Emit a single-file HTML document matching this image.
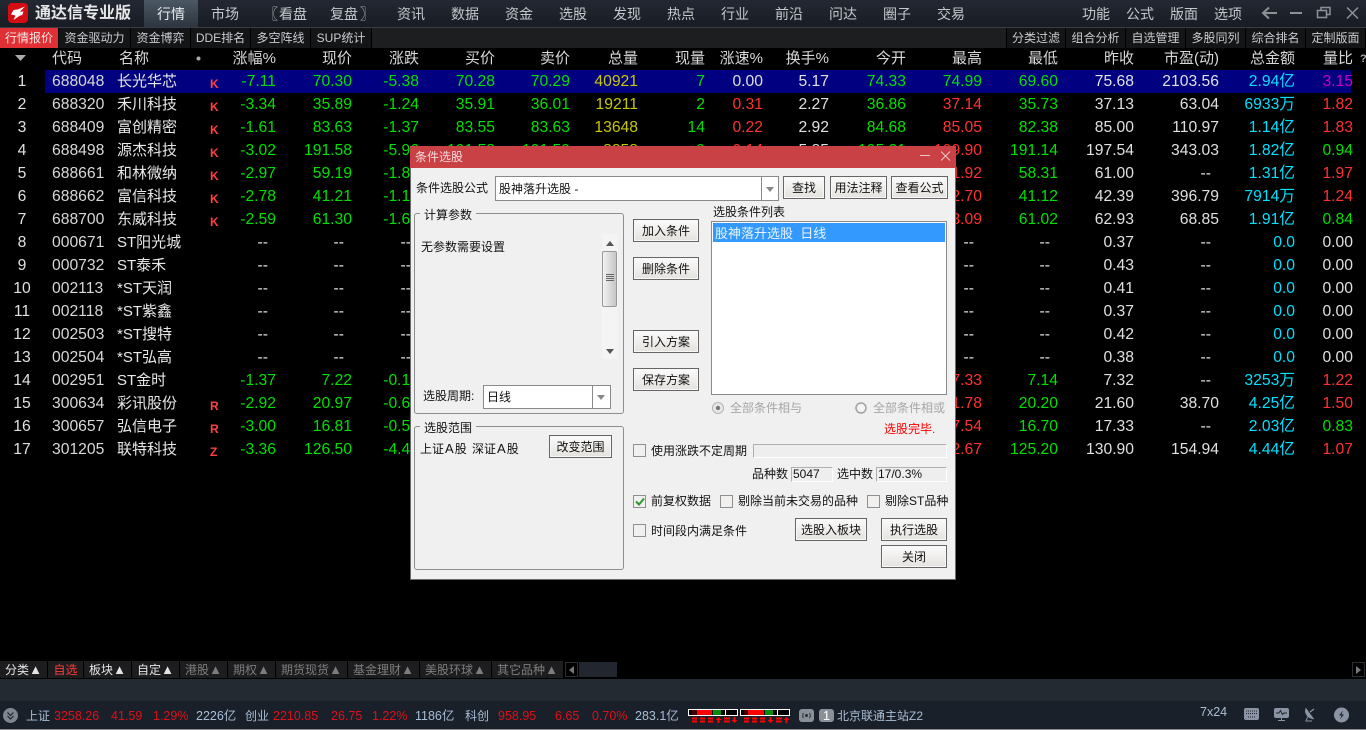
<!DOCTYPE html>
<html><head><meta charset="utf-8">
<style>
html,body{margin:0;padding:0;background:#000;width:1366px;height:730px;overflow:hidden}
body{font-family:"Liberation Sans","Noto Sans CJK SC",sans-serif;position:relative;color:#ddd}
div,span,b,i{position:absolute;white-space:nowrap;box-sizing:border-box;font-style:normal}
#top{left:0;top:0;width:1366px;height:27px;background:linear-gradient(#232832,#181c24)}
#top span{top:5px;font-size:14px;line-height:18px;color:#c4c8cc;margin-left:-14px}
#top .f{margin-left:0}
#act{left:144px;top:0;width:54px;height:27px;background:linear-gradient(#4b5763,#2d3640)}
#tl{left:0;top:27px;width:1366px;height:1px;background:#3a3e44}
#sub{left:0;top:28px;width:1366px;height:20px;background:#1d1e20}
#sub b{top:0;height:20px;background:#141516;border-right:1px solid #000;font-weight:normal;font-size:12px;line-height:20px;text-align:center;color:#c8ccd0}
#hd{left:0;top:0;width:1366px;height:70px}
#hd span{top:49px;font-size:15px;line-height:20px;color:#d8d8d8}
.row{left:0;width:1366px;height:23px;font-size:15.7px;line-height:24px;color:#e0e0e0}
.row span{top:0}
.sel{background:linear-gradient(90deg,transparent 45px,#000080 45px,#000080 1351px,transparent 1351px)}
.n{left:7px;width:30px;text-align:center}
.co{left:52px;color:#d8d8d8}
.na{left:117px;font-size:15px;color:#e8e8e8}
.row .k{left:210px;top:3px;font-size:12px;font-weight:bold;color:#ff4040;line-height:22px}
.a{right:1090px}.b{right:1014px}.c{right:947px}.d{right:871px}.e{right:796px}.f2{right:728px}.h{right:661px}.j{right:603px}.l{right:537px}.m{right:460px}.o{right:384px}.p{right:308px}.q{right:232px}.s{right:147px}.t{right:71px}.u{right:13px}
.x{margin-right:8px}
.g{color:#00e000}.r{color:#ff3232}.y{color:#c8c800}.w{color:#e0e0e0}.cy{color:#00e0ff}.mg{color:#c800c0}
#dlg{left:410px;top:146px;width:546px;height:434px;background:#f0f0f0;box-shadow:inset -1px -1px 0 #6a6a6a,inset 1px 0 0 #6a6a6a;font-size:12px;color:#111}
#dlg>*{line-height:16px}
#tt{left:0;top:0;width:546px;height:22px;background:#c94045;color:#f6dcdc;padding:3px 5px;font-size:12px}
.lb{font-size:12px}
.fd{background:#fff;border:1px solid #8a8a8a}
#dlg .btn{background:linear-gradient(#fbfbfb,#e4e2de);border:1px solid #666;text-align:center;font-size:12px;line-height:23px;color:#111;box-shadow:inset 0 0 0 1px #f8f8f8}
.grp{border:1px solid #8e8e8e;border-radius:3px}
.gl{background:#f0f0f0;padding:0 4px;font-size:12px}
.cb{width:13px;height:13px;background:#f1f0ee;border:1px solid #8f8f8f}
#dlg .ro{background:#eee;border:1px solid #b0b0b0;border-right-color:#fff;border-bottom-color:#fff;line-height:13px;padding-left:1px}
#tabs{left:0;top:0;width:1366px;height:0}
#tabs b{top:661px;height:17px;background:#1d1d1f;font-weight:normal;font-size:12px;line-height:19px;text-align:center;color:#7d7d7d}
#tabs b.on{color:#e4e4e4}
#tabs b i{position:static;font-size:13px;line-height:17px}
#band{left:0;top:679px;width:1366px;height:22px;background:#232a32}
#st{left:0;top:701px;width:1366px;height:28px;background:#1a2029}
#ln{left:0;top:729px;width:1366px;height:1px;background:#8a8a8a}
.st{top:708px;font-size:12.5px;line-height:16px;color:#a9bdd6}
.rd{color:#e01018}
.ic{background:#8a9098;border-radius:3px}
</style></head><body>

<div id="top">
<div id="act"></div>
<svg style="position:absolute;left:8px;top:3px" width="20" height="20" viewBox="0 0 20 20"><rect width="20" height="20" rx="4" fill="#d40d12"/><path d="M17 3.500L9.500 6.500 5.500 7 3 11.500l4.500 1L5.500 17 12 12.500l2.200-.4 1.300-3.600-3.700.2z" fill="#fff"/></svg>
<span class="f" style="left:35px;top:5px;font-size:16px;font-weight:bold;color:#e6e6e6">通达信专业版</span>
<span style="left:171px;color:#e8ecf0">行情</span><span style="left:225px">市场</span>
<span class="f" style="left:264px">〖</span><span class="f" style="left:279px">看盘</span><span class="f" style="left:330px">复盘</span><span class="f" style="left:360px">〗</span>
<span style="left:411px">资讯</span><span style="left:465px">数据</span><span style="left:519px">资金</span><span style="left:573px">选股</span><span style="left:627px">发现</span><span style="left:681px">热点</span><span style="left:735px">行业</span><span style="left:789px">前沿</span><span style="left:843px">问达</span><span style="left:897px">圈子</span><span style="left:951px">交易</span>
<span style="left:1096px">功能</span><span style="left:1140px">公式</span><span style="left:1184px">版面</span><span style="left:1228px">选项</span>
<svg style="position:absolute;left:1260px;top:5px" width="100" height="18" viewBox="0 0 100 18" fill="none" stroke="#8d9297" stroke-width="1.5"><path d="M17 8H3M9 2.500L3 8l6 5.500" stroke-width="2"/><path d="M30 8h12" stroke-width="2"/><path d="M57.500 5.500h9v7h-9zM61 5.500v-3h9v7h-3.500"/><path d="M87 2.500l11 11M98 2.500l-11 11"/></svg>
</div>
<div id="tl"></div>

<div id="sub">
<b style="left:0;width:59px;background:#e03035;color:#f4e4e4">行情报价</b>
<b style="left:59px;width:72px">资金驱动力</b><b style="left:131px;width:60px">资金博弈</b><b style="left:191px;width:60px">DDE排名</b><b style="left:251px;width:60px">多空阵线</b><b style="left:311px;width:61px">SUP统计</b>
<b style="left:1006px;width:60px;border-left:1px solid #000">分类过滤</b><b style="left:1066px;width:60px">组合分析</b><b style="left:1126px;width:60px">自选管理</b><b style="left:1186px;width:60px">多股同列</b><b style="left:1246px;width:60px">综合排名</b><b style="left:1306px;width:60px">定制版面</b>
</div>

<div id="hd">
<svg style="position:absolute;left:15px;top:55px" width="11" height="6"><path d="M0 0h11L5.500 6z" fill="#aaa"/></svg>
<span style="left:52px">代码</span><span style="left:119px">名称</span>
<svg style="position:absolute;left:196px;top:56px" width="5" height="5"><circle cx="2.500" cy="2.500" r="2" fill="#aaa"/></svg>
<span class="a">涨幅%</span><span class="b">现价</span><span class="c">涨跌</span><span class="d">买价</span><span class="e">卖价</span><span class="f2">总量</span><span class="h">现量</span><span class="j">涨速%</span><span class="l">换手%</span><span class="m">今开</span><span class="o">最高</span><span class="p">最低</span><span class="q">昨收</span><span class="s">市盈(动)</span><span class="t">总金额</span><span class="u">量比</span>
<span style="left:1360px;font-size:11px;font-weight:bold;color:#aaa">?</span>
</div>

<div class="row sel" style="top:70px"><span class="n">1</span><span class="co">688048</span><span class="na">长光华芯</span><span class="k">K</span><span class="a g">-7.11</span><span class="b g">70.30</span><span class="c g">-5.38</span><span class="d g">70.28</span><span class="e g">70.29</span><span class="f2 y">40921</span><span class="h g">7</span><span class="j w">0.00</span><span class="l w">5.17</span><span class="m g">74.33</span><span class="o g">74.99</span><span class="p g">69.60</span><span class="q w">75.68</span><span class="s w">2103.56</span><span class="t cy">2.94亿</span><span class="u mg">3.15</span></div>
<div class="row" style="top:93px"><span class="n">2</span><span class="co">688320</span><span class="na">禾川科技</span><span class="k">K</span><span class="a g">-3.34</span><span class="b g">35.89</span><span class="c g">-1.24</span><span class="d g">35.91</span><span class="e g">36.01</span><span class="f2 y">19211</span><span class="h g">2</span><span class="j r">0.31</span><span class="l w">2.27</span><span class="m g">36.86</span><span class="o r">37.14</span><span class="p g">35.73</span><span class="q w">37.13</span><span class="s w">63.04</span><span class="t cy">6933万</span><span class="u r">1.82</span></div>
<div class="row" style="top:116px"><span class="n">3</span><span class="co">688409</span><span class="na">富创精密</span><span class="k">K</span><span class="a g">-1.61</span><span class="b g">83.63</span><span class="c g">-1.37</span><span class="d g">83.55</span><span class="e g">83.63</span><span class="f2 y">13648</span><span class="h g">14</span><span class="j r">0.22</span><span class="l w">2.92</span><span class="m g">84.68</span><span class="o r">85.05</span><span class="p g">82.38</span><span class="q w">85.00</span><span class="s w">110.97</span><span class="t cy">1.14亿</span><span class="u r">1.83</span></div>
<div class="row" style="top:139px"><span class="n">4</span><span class="co">688498</span><span class="na">源杰科技</span><span class="k">K</span><span class="a g">-3.02</span><span class="b g">191.58</span><span class="c g">-5.96</span><span class="d g">191.58</span><span class="e g">191.59</span><span class="f2 y">8858</span><span class="h g">9</span><span class="j r">0.14</span><span class="l w">5.85</span><span class="m g">195.01</span><span class="o r">199.90</span><span class="p g">191.14</span><span class="q w">197.54</span><span class="s w">343.03</span><span class="t cy">1.82亿</span><span class="u g">0.94</span></div>
<div class="row" style="top:162px"><span class="n">5</span><span class="co">688661</span><span class="na">和林微纳</span><span class="k">K</span><span class="a g">-2.97</span><span class="b g">59.19</span><span class="c g">-1.81</span><span class="o r">61.92</span><span class="p g">58.31</span><span class="q w">61.00</span><span class="s x">--</span><span class="t cy">1.31亿</span><span class="u r">1.97</span></div>
<div class="row" style="top:185px"><span class="n">6</span><span class="co">688662</span><span class="na">富信科技</span><span class="k">K</span><span class="a g">-2.78</span><span class="b g">41.21</span><span class="c g">-1.18</span><span class="o r">42.70</span><span class="p g">41.12</span><span class="q w">42.39</span><span class="s w">396.79</span><span class="t cy">7914万</span><span class="u r">1.24</span></div>
<div class="row" style="top:208px"><span class="n">7</span><span class="co">688700</span><span class="na">东威科技</span><span class="k">K</span><span class="a g">-2.59</span><span class="b g">61.30</span><span class="c g">-1.63</span><span class="o r">63.09</span><span class="p g">61.02</span><span class="q w">62.93</span><span class="s w">68.85</span><span class="t cy">1.91亿</span><span class="u g">0.84</span></div>
<div class="row" style="top:231px"><span class="n">8</span><span class="co">000671</span><span class="na">ST阳光城</span><span class="a x">--</span><span class="b x">--</span><span class="c x">--</span><span class="o x">--</span><span class="p x">--</span><span class="q w">0.37</span><span class="s x">--</span><span class="t cy">0.0</span><span class="u w">0.00</span></div>
<div class="row" style="top:254px"><span class="n">9</span><span class="co">000732</span><span class="na">ST泰禾</span><span class="a x">--</span><span class="b x">--</span><span class="c x">--</span><span class="o x">--</span><span class="p x">--</span><span class="q w">0.43</span><span class="s x">--</span><span class="t cy">0.0</span><span class="u w">0.00</span></div>
<div class="row" style="top:277px"><span class="n">10</span><span class="co">002113</span><span class="na">*ST天润</span><span class="a x">--</span><span class="b x">--</span><span class="c x">--</span><span class="o x">--</span><span class="p x">--</span><span class="q w">0.41</span><span class="s x">--</span><span class="t cy">0.0</span><span class="u w">0.00</span></div>
<div class="row" style="top:300px"><span class="n">11</span><span class="co">002118</span><span class="na">*ST紫鑫</span><span class="a x">--</span><span class="b x">--</span><span class="c x">--</span><span class="o x">--</span><span class="p x">--</span><span class="q w">0.37</span><span class="s x">--</span><span class="t cy">0.0</span><span class="u w">0.00</span></div>
<div class="row" style="top:323px"><span class="n">12</span><span class="co">002503</span><span class="na">*ST搜特</span><span class="a x">--</span><span class="b x">--</span><span class="c x">--</span><span class="o x">--</span><span class="p x">--</span><span class="q w">0.42</span><span class="s x">--</span><span class="t cy">0.0</span><span class="u w">0.00</span></div>
<div class="row" style="top:346px"><span class="n">13</span><span class="co">002504</span><span class="na">*ST弘高</span><span class="a x">--</span><span class="b x">--</span><span class="c x">--</span><span class="o x">--</span><span class="p x">--</span><span class="q w">0.38</span><span class="s x">--</span><span class="t cy">0.0</span><span class="u w">0.00</span></div>
<div class="row" style="top:369px"><span class="n">14</span><span class="co">002951</span><span class="na">ST金时</span><span class="a g">-1.37</span><span class="b g">7.22</span><span class="c g">-0.10</span><span class="o r">7.33</span><span class="p g">7.14</span><span class="q w">7.32</span><span class="s x">--</span><span class="t cy">3253万</span><span class="u r">1.22</span></div>
<div class="row" style="top:392px"><span class="n">15</span><span class="co">300634</span><span class="na">彩讯股份</span><span class="k">R</span><span class="a g">-2.92</span><span class="b g">20.97</span><span class="c g">-0.63</span><span class="o r">21.78</span><span class="p g">20.20</span><span class="q w">21.60</span><span class="s w">38.70</span><span class="t cy">4.25亿</span><span class="u r">1.50</span></div>
<div class="row" style="top:415px"><span class="n">16</span><span class="co">300657</span><span class="na">弘信电子</span><span class="k">R</span><span class="a g">-3.00</span><span class="b g">16.81</span><span class="c g">-0.52</span><span class="o r">17.54</span><span class="p g">16.70</span><span class="q w">17.33</span><span class="s x">--</span><span class="t cy">2.03亿</span><span class="u g">0.83</span></div>
<div class="row" style="top:438px"><span class="n">17</span><span class="co">301205</span><span class="na">联特科技</span><span class="k">Z</span><span class="a g">-3.36</span><span class="b g">126.50</span><span class="c g">-4.40</span><span class="o r">132.67</span><span class="p g">125.20</span><span class="q w">130.90</span><span class="s w">154.94</span><span class="t cy">4.44亿</span><span class="u r">1.07</span></div>

<div id="dlg">
<div id="tt">条件选股</div>
<svg style="position:absolute;left:510px;top:4px" width="32" height="14" fill="none" stroke="#eec8c8" stroke-width="1"><path d="M0 5.500h10M21 1.500l9 9M30 1.500l-9 9"/></svg>

<span class="lb" style="left:6px;top:34px">条件选股公式</span>
<div class="fd" style="left:85px;top:30px;width:284px;height:25px"></div>
<span class="lb" style="left:89px;top:35px">股神落升选股 -</span>
<div style="left:351px;top:31px;width:1px;height:23px;background:#8a8a8a"></div>
<svg style="position:absolute;left:356px;top:41px" width="8" height="5"><path d="M0 0h8L4 5z" fill="#888"/></svg>
<div class="btn" style="left:373px;top:30px;width:42px;height:23px">查找</div>
<div class="btn" style="left:420px;top:30px;width:57px;height:23px">用法注释</div>
<div class="btn" style="left:481px;top:30px;width:57px;height:23px">查看公式</div>

<div class="grp" style="left:4px;top:67px;width:210px;height:201px"></div>
<span class="gl" style="left:10px;top:61px">计算参数</span>
<span class="lb" style="left:11px;top:93px">无参数需要设置</span>
<div style="left:192px;top:88px;width:16px;height:125px;background:#f4f4f4"></div>
<svg style="position:absolute;left:196px;top:95px" width="8" height="5"><path d="M0 5h8L4 0z" fill="#555"/></svg>
<svg style="position:absolute;left:196px;top:203px" width="8" height="5"><path d="M0 0h8L4 5z" fill="#555"/></svg>
<div style="left:192px;top:105px;width:15px;height:56px;background:linear-gradient(90deg,#f2f2f2,#c6c6c6);border:1px solid #9a9a9a;border-radius:2px"></div>
<svg style="position:absolute;left:196px;top:128px" width="8" height="9" stroke="#666"><path d="M0 .5h8M0 2.500h8M0 4.500h8M0 6.500h8"/></svg>

<div class="btn" style="left:223px;top:73px;width:66px;height:23px">加入条件</div>
<div class="btn" style="left:223px;top:111px;width:66px;height:23px">删除条件</div>
<div class="btn" style="left:223px;top:184px;width:66px;height:23px">引入方案</div>
<div class="btn" style="left:223px;top:222px;width:66px;height:23px">保存方案</div>

<span class="lb" style="left:303px;top:58px">选股条件列表</span>
<div class="fd" style="left:301px;top:75px;width:236px;height:174px"></div>
<div style="left:303px;top:77px;width:232px;height:19px;background:#3399ff;color:#e8f4ff;font-size:13px;line-height:21px;padding-left:2px">股神落升选股&nbsp;&nbsp;日线</div>

<svg style="position:absolute;left:302px;top:256px" width="12" height="12"><circle cx="6" cy="6" r="5.500" fill="#e8e8e8" stroke="#b4b4b4"/><circle cx="6" cy="6" r="2.200" fill="#777"/></svg>
<span class="lb" style="left:320px;top:254px;color:#a6a6a6">全部条件相与</span>
<svg style="position:absolute;left:445px;top:256px" width="12" height="12"><circle cx="6" cy="6" r="5" fill="#f4f4f4" stroke="#a0a0a0" stroke-width="1.500"/></svg>
<span class="lb" style="left:463px;top:254px;color:#a6a6a6">全部条件相或</span>
<span class="lb" style="left:474px;top:275px;color:#f00">选股完毕.</span>

<span class="lb" style="left:13px;top:242px">选股周期:</span>
<div class="fd" style="left:73px;top:239px;width:128px;height:24px"></div>
<span class="lb" style="left:77px;top:243px">日线</span>
<div style="left:182px;top:240px;width:1px;height:22px;background:#8a8a8a"></div>
<svg style="position:absolute;left:187px;top:249px" width="8" height="5"><path d="M0 0h8L4 5z" fill="#888"/></svg>

<div class="grp" style="left:4px;top:280px;width:210px;height:144px"></div>
<span class="gl" style="left:10px;top:274px">选股范围</span>
<span class="lb" style="left:10px;top:295px">上证<i style="position:static;font-size:13px;margin:0 1px">A</i>股</span>
<span class="lb" style="left:62px;top:295px">深证<i style="position:static;font-size:13px;margin:0 1px">A</i>股</span>
<div class="btn" style="left:139px;top:289px;width:63px;height:23px">改变范围</div>

<div class="cb" style="left:223px;top:298px"></div>
<span class="lb" style="left:241px;top:297px">使用涨跌不定周期</span>
<div class="ro" style="left:343px;top:298px;width:194px;height:14px"></div>
<span class="lb" style="left:342px;top:320px">品种数</span>
<div class="ro" style="left:381px;top:321px;width:42px;height:15px">5047</div>
<span class="lb" style="left:427px;top:320px">选中数</span>
<div class="ro" style="left:466px;top:321px;width:71px;height:15px">17/0.3%</div>

<div class="cb" style="left:223px;top:349px"></div>
<svg style="position:absolute;left:225px;top:351px" width="10" height="9" fill="none" stroke="#2a9a2a" stroke-width="2"><path d="M1 4.500l3 3 5-6"/></svg>
<span class="lb" style="left:241px;top:347px">前复权数据</span>
<div class="cb" style="left:310px;top:349px"></div>
<span class="lb" style="left:328px;top:347px">剔除当前未交易的品种</span>
<div class="cb" style="left:457px;top:349px"></div>
<span class="lb" style="left:475px;top:347px">剔除ST品种</span>

<div class="cb" style="left:223px;top:378px"></div>
<span class="lb" style="left:241px;top:377px">时间段内满足条件</span>
<div class="btn" style="left:385px;top:372px;width:72px;height:23px">选股入板块</div>
<div class="btn" style="left:471px;top:372px;width:66px;height:23px">执行选股</div>
<div class="btn" style="left:471px;top:399px;width:66px;height:23px">关闭</div>
</div>

<div id="tabs">
<b class="on" style="left:0;width:47px">分类<i>▲</i></b><b style="left:48px;width:35px;color:#ff3a3a">自选</b><b class="on" style="left:84px;width:47px">板块<i>▲</i></b><b class="on" style="left:132px;width:47px">自定<i>▲</i></b><b style="left:180px;width:47px">港股<i>▲</i></b><b style="left:228px;width:47px">期权<i>▲</i></b><b style="left:276px;width:71px">期货现货<i>▲</i></b><b style="left:348px;width:71px">基金理财<i>▲</i></b><b style="left:420px;width:71px">美股环球<i>▲</i></b><b style="left:492px;width:71px">其它品种<i>▲</i></b>
<div style="left:565px;top:662px;width:13px;height:15px;border:1px solid #2a2f36"></div>
<svg style="position:absolute;left:569px;top:666px" width="5" height="8"><path d="M5 0v8L0 4z" fill="#777"/></svg>
<div style="left:579px;top:662px;width:38px;height:15px;background:#22262e"></div>
<div style="left:1352px;top:662px;width:13px;height:15px;border:1px solid #2a2f36"></div>
<svg style="position:absolute;left:1356px;top:666px" width="5" height="8"><path d="M0 0v8l5-4z" fill="#777"/></svg>
</div>

<div id="band"></div>
<div id="st"></div>
<div id="ln"></div>
<svg style="position:absolute;left:3px;top:708px" width="15" height="15"><circle cx="7.500" cy="7.500" r="7.500" fill="#7e8690"/><path d="M4.500 4.500l3 3 3-3M4.500 8l3 3 3-3" fill="none" stroke="#22262c" stroke-width="1.200"/></svg>
<span class="st" style="left:26px;font-size:12px">上证</span><span class="st rd" style="left:54px">3258.26</span><span class="st rd" style="left:111px">41.59</span><span class="st rd" style="left:153px">1.29%</span><span class="st" style="left:196px">2226亿</span>
<span class="st" style="left:245px;font-size:12px">创业</span><span class="st rd" style="left:273px">2210.85</span><span class="st rd" style="left:331px">26.75</span><span class="st rd" style="left:372px">1.22%</span><span class="st" style="left:415px">1186亿</span>
<span class="st" style="left:465px;font-size:12px">科创</span><span class="st rd" style="left:498px">958.95</span><span class="st rd" style="left:555px">6.65</span><span class="st rd" style="left:592px">0.70%</span><span class="st" style="left:635px">283.1亿</span>
<svg style="position:absolute;left:688px;top:708px" width="104" height="16">
<rect x=".5" y="1.500" width="49" height="6" fill="#000" stroke="#fff"/><rect x="4" y="2" width="5" height="5" fill="#400"/><rect x="9" y="2" width="15" height="5" fill="#f00"/><rect x="25" y="2" width="8" height="5" fill="#0a8a0a"/><path d="M37.500 1v7" stroke="#fff"/>
<rect x="52.500" y="1.500" width="49" height="6" fill="#000" stroke="#fff"/><rect x="56" y="2" width="4" height="5" fill="#400"/><rect x="60" y="2" width="16" height="5" fill="#f00"/><rect x="77" y="2" width="8" height="5" fill="#0a8a0a"/><path d="M89.500 1v7" stroke="#fff"/>
<g fill="#f00"><path d="M4 9.500h5v2H4zM4 12.500h5v2H4zM12 9.500h5v2h-5zM12 12.500h5v2h-5zM20 9.500h5v2h-5zM20 12.500h5v2h-5zM36 9.500h6v2h-6zM36 12.500h6v2h-6z"/>
<path d="M30.500 9l3 3h-2v3h-2v-3h-2z"/><path d="M46.500 15l3-3h-2V9h-2v3h-2z"/>
<path d="M56 9.500h5v2h-5zM56 12.500h5v2h-5zM64 9.500h5v2h-5zM64 12.500h5v2h-5zM72 9.500h5v2h-5zM72 12.500h5v2h-5zM88 9.500h6v2h-6zM88 12.500h6v2h-6z"/>
<path d="M82.500 15l3-3h-2V9h-2v3h-2z"/><path d="M98.500 9l3 3h-2v3h-2v-3h-2z"/></g></svg>
<div class="ic" style="left:799px;top:709px;width:15px;height:13px"></div>
<svg style="position:absolute;left:799px;top:709px" width="15" height="13" fill="none" stroke="#2a2e34"><circle cx="7.500" cy="6.500" r="1" fill="#2a2e34"/><path d="M4.500 4c-1 1.500-1 3.500 0 5M10.500 4c1 1.500 1 3.500 0 5"/></svg>
<div class="ic" style="left:819px;top:709px;width:15px;height:13px;color:#fff;font-size:13px;line-height:13px;text-align:center">1</div>
<span class="st" style="left:837px;font-size:12px">北京联通主站Z2</span>
<span class="st" style="left:1200px;top:704px;font-size:12.5px">7x24</span>
<svg style="position:absolute;left:1244px;top:707px" width="106" height="16">
<rect x="0" y="1" width="15" height="12" rx="2" fill="#8a94a4"/><path d="M2 4h11M2 6.500h11M4 10h7" stroke="#20262e"  stroke-dasharray="1 1"/>
<rect x="30" y="1" width="15" height="10" rx="2" fill="#8a94a4"/><path d="M32 6h3l1.500-2.500 2 4L40 6h3" fill="none" stroke="#20262e"/><path d="M37.500 11v2M34 13.500h7" stroke="#8a94a4"/>
<path d="M62 2c-1.500 4 2 9 7 9.500zM66 5l4-3" fill="#8a94a4" stroke="#8a94a4" stroke-width="1.200"/><path d="M64 9l-2 5h6" fill="none" stroke="#8a94a4"/>
<circle cx="97.500" cy="8" r="7.500" fill="#8a94a4"/><path d="M99 3.500L95 8.500h2.500L96 12.500l4-5h-2.500z" fill="#20262e"/></svg>
</body></html>
